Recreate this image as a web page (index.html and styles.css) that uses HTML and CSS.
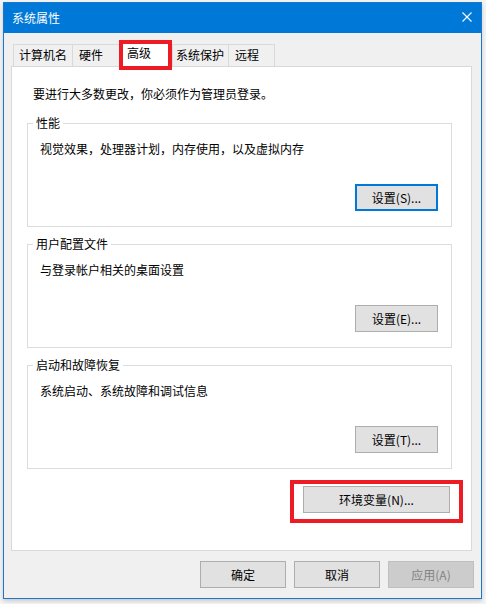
FILE: index.html
```html
<!DOCTYPE html>
<html lang="zh-CN">
<head>
<meta charset="utf-8">
<title>系统属性</title>
<link rel="stylesheet" href="styles.css">
</head>
<body>
<div class="window">
  <div class="titlebar">
    <span class="title">系统属性</span>
    <svg class="close" width="10" height="10" viewBox="0 0 10 10"><path d="M0.5 0.5 L9.5 9.5 M9.5 0.5 L0.5 9.5" stroke="#fff" stroke-width="1.1" fill="none"/></svg>
  </div>
  <div class="content">
    <div class="tabs">
      <div class="tab t1">计算机名</div>
      <div class="tab t2">硬件</div>
      <div class="tab sel">高级</div>
      <div class="tab t4">系统保护</div>
      <div class="tab t5 last">远程</div>
    </div>
    <div class="panel">
      <p class="intro">要进行大多数更改，你必须作为管理员登录。</p>
      <div class="group">
        <span class="legend">性能</span>
        <p class="desc">视觉效果，处理器计划，内存使用，以及虚拟内存</p>
        <button class="btn set default">设置(S)...</button>
      </div>
      <div class="group">
        <span class="legend">用户配置文件</span>
        <p class="desc">与登录帐户相关的桌面设置</p>
        <button class="btn set">设置(E)...</button>
      </div>
      <div class="group">
        <span class="legend">启动和故障恢复</span>
        <p class="desc">系统启动、系统故障和调试信息</p>
        <button class="btn set">设置(T)...</button>
      </div>
      <div class="highlight">
        <button class="btn env">环境变量(N)...</button>
      </div>
    </div>
    <div class="actions">
      <button class="btn act">确定</button>
      <button class="btn act">取消</button>
      <button class="btn act disabled">应用(A)</button>
    </div>
  </div>
</div>
</body>
</html>
```

FILE: styles.css
```css
html, body {
  margin: 0;
  padding: 0;
}
body {
  width: 486px;
  height: 604px;
  overflow: hidden;
  background: #f4f4f4;
  font-family: "Microsoft YaHei UI", "Noto Sans CJK SC", sans-serif;
  font-size: 12px;
  color: #000;
}
.window {
  box-sizing: border-box;
  margin: 2px 0 0 3px;
  width: 479px;
  height: 597px;
  border: 1px solid #1a79cc;
  background: #f0f0f0;
  display: flex;
  flex-direction: column;
  box-shadow: 0 2px 4px rgba(0,0,0,0.18);
}
.titlebar {
  height: 30px;
  background: #0078d7;
  display: flex;
  align-items: center;
  justify-content: space-between;
  padding: 0 9px 0 8px;
  color: #fff;
}
.title {
  line-height: 16px;
  margin-top: -1px;
}
.close {
  display: block;
  margin-top: -2px;
}
.content {
  display: flex;
  flex-direction: column;
  padding: 11px 0 0 7px;
}
.tabs {
  display: flex;
  align-items: flex-start;
  height: 22px;
  margin-left: 2px;
}
.tab {
  box-sizing: border-box;
  height: 22px;
  border-top: 1px solid #d9d9d9;
  border-left: 1px solid #d9d9d9;
  line-height: 20px;
  white-space: nowrap;
  background: #f0f0f0;
}
.tab.last { border-right: 1px solid #d9d9d9; }
.t1 { width: 59px; padding-left: 5px; }
.t2 { width: 47px; padding-left: 6px; }
.t4 { width: 56px; padding-left: 3px; }
.t5 { width: 47px; padding-left: 6px; }
.tab.sel {
  width: 53px;
  height: 30px;
  margin-top: -4px;
  border: 4px solid #ed1c24;
  background: #fff;
  padding: 1px 0 0 4px;
  line-height: 16px;
  position: relative;
  z-index: 2;
}
.panel {
  box-sizing: border-box;
  width: 461px;
  height: 485px;
  border: 1px solid #d9d9d9;
  background: #fff;
  display: flex;
  flex-direction: column;
  padding: 19px 0 0 15px;
}
.intro {
  margin: 0 0 0 6px;
  line-height: 16px;
}
.group {
  box-sizing: border-box;
  width: 425px;
  height: 104px;
  border: 1px solid #dcdcdc;
  display: flex;
  flex-direction: column;
  align-items: flex-start;
  margin-top: 21px;
}
.group + .group { margin-top: 17px; }
.legend {
  margin: -9px 0 0 5px;
  padding: 0 3px;
  background: #fff;
  line-height: 16px;
  white-space: nowrap;
}
.desc {
  margin: 10px 0 0 12px;
  line-height: 16px;
}
.btn {
  box-sizing: border-box;
  height: 27px;
  border: 1px solid #adadad;
  background: #e1e1e1;
  font-family: inherit;
  font-size: 12px;
  color: #000;
  padding: 0;
  line-height: 16px;
}
.btn.set {
  width: 83px;
  align-self: flex-end;
  margin: 27px 13px 0 0;
}
.btn.default {
  border: 2px solid #0078d7;
}
.highlight {
  box-sizing: border-box;
  align-self: flex-end;
  width: 173px;
  height: 43px;
  margin: 11px 8px 0 0;
  border: 4px solid #ed1c24;
  padding: 2px 9px 0 9px;
}
.btn.env {
  width: 147px;
  display: block;
}
.actions {
  display: flex;
  justify-content: flex-end;
  gap: 8px;
  margin: 10px 7px 0 0;
}
.btn.act { width: 86px; }
.btn.disabled {
  background: #cccccc;
  border-color: #bfbfbf;
  color: #838383;
}
```
